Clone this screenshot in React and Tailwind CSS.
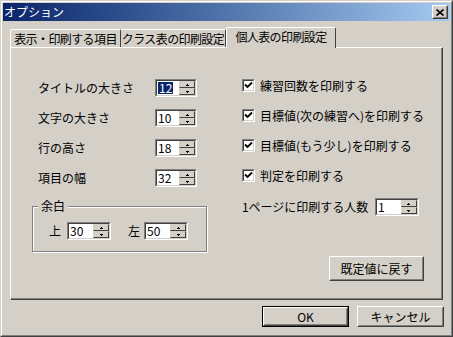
import React from "react";

const FONT = { fontFamily: '"Noto Sans CJK JP", "Noto Sans", sans-serif' };

// sunken 3d edge (edit boxes, checkboxes)
const Sunken = ({ className, children }) => (
  <div className={`border border-t-[#808080] border-l-[#808080] border-b-white border-r-white ${className}`}>
    <div className="h-full w-full border border-t-[#404040] border-l-[#404040] border-b-[#d4d0c8] border-r-[#d4d0c8] bg-white flex">
      {children}
    </div>
  </div>
);

// raised 3d edge (buttons)
const Raised = ({ className, children }) => (
  <div className={`border border-t-white border-l-white border-b-[#404040] border-r-[#404040] bg-[#d4d0c8] ${className}`}>
    <div className="h-full w-full border border-t-[#d4d0c8] border-l-[#d4d0c8] border-b-[#808080] border-r-[#808080] flex items-center justify-center">
      {children}
    </div>
  </div>
);

const SpinHalf = ({ up }) => (
  <div className="flex-1 border border-t-[#d4d0c8] border-l-[#d4d0c8] border-b-[#404040] border-r-[#404040] bg-[#d4d0c8] flex items-center justify-center">
    <svg width="3" height="2" viewBox="0 0 3 2">
      {up ? <path d="M1 0h1v1h1v1H0V1h1z" fill="#000" /> : <path d="M0 0h3v1H2v1H1V1H0z" fill="#000" />}
    </svg>
  </div>
);

const Spin = ({ value, width = "w-[42px]", selected }) => (
  <Sunken className={`${width} h-[18px] shrink-0`}>
    <div className="flex-1 flex items-center pl-px text-[12px] leading-none text-black">
      <span className={selected ? "bg-[#0a246a] text-white px-px" : ""}>{value}</span>
    </div>
    <div className="w-[16px] flex flex-col">
      <SpinHalf up />
      <SpinHalf />
    </div>
  </Sunken>
);

const Check = ({ label }) => (
  <div className="flex items-center h-[13px]">
    <Sunken className="w-[13px] h-[13px] shrink-0">
      <svg width="9" height="9" viewBox="0 0 9 9" className="m-auto">
        <path d="M1 3.5l2.5 2.5L8 1.5" stroke="#000" strokeWidth="1.8" fill="none" />
      </svg>
    </Sunken>
    <span className="ml-[5px] text-[12px] leading-none whitespace-nowrap">{label}</span>
  </div>
);

const Button = ({ children, className, primary }) =>
  primary ? (
    <div className={`border border-black ${className}`}>
      <Raised className="h-full w-full">
        <span className="text-[12px] leading-none">{children}</span>
      </Raised>
    </div>
  ) : (
    <Raised className={className}>
      <span className="text-[12px] leading-none">{children}</span>
    </Raised>
  );

const rows = [
  { label: "タイトルの大きさ", value: "12", selected: true },
  { label: "文字の大きさ", value: "10" },
  { label: "行の高さ", value: "18" },
  { label: "項目の幅", value: "32" },
];

const checks = [
  "練習回数を印刷する",
  "目標値(次の練習へ)を印刷する",
  "目標値(もう少し)を印刷する",
  "判定を印刷する",
];

export default function App() {
  return (
    <div style={FONT} className="w-[453px] h-[337px] bg-[#d4d0c8] text-black border border-t-[#d4d0c8] border-l-[#d4d0c8] border-r-[#404040] border-b-[#404040]">
      <div className="h-full border border-t-white border-l-white border-r-[#808080] border-b-[#808080] p-px flex flex-col">
        {/* title bar */}
        <div className="h-[18px] bg-linear-to-r from-[#0a246a] to-[#a6caf0] flex items-center pl-[1px] pr-[2px]">
          <span className="text-white text-[12px] leading-none">オプション</span>
          <Raised className="ml-auto w-[16px] h-[14px]">
            <svg width="8" height="7" viewBox="0 0 8 7">
              <path d="M0.5 0.5l7 6M7.5 0.5l-7 6" stroke="#000" strokeWidth="1.6" />
            </svg>
          </Raised>
        </div>

        {/* tabs */}
        <div className="mt-[6px] ml-[7px] flex items-end h-[20px] text-[12px] leading-none whitespace-nowrap tracking-[-0.6px]">
          <div className="w-[111px] h-[18px] border-t border-l border-r border-t-white border-l-white border-r-[#404040] rounded-t-[2px] flex items-center justify-center">
            表示・印刷する項目
          </div>
          <div className="w-[105px] h-[18px] border-t border-r border-t-white border-r-[#404040] rounded-t-[2px] flex items-center justify-center">
            クラス表の印刷設定
          </div>
          <div className="relative z-10 -mb-px w-[110px] h-[21px] bg-[#d4d0c8] border-t border-l border-r border-t-white border-l-white border-r-[#404040] rounded-t-[2px] flex items-center justify-center pb-[2px]">
            個人表の印刷設定
          </div>
        </div>

        {/* panel */}
        <div className="ml-[7px] w-[433px] h-[253px] border border-t-white border-l-white border-r-[#404040] border-b-[#404040]">
          <div className="h-full border-r border-b border-r-[#808080] border-b-[#808080] flex">
            {/* left column */}
            <div className="w-[230px] pl-[21px] pt-[31px] flex flex-col">
              <div className="flex flex-col gap-[12px] pl-[6px]">
                {rows.map((r) => (
                  <div key={r.label} className="flex items-center h-[18px]">
                    <span className="w-[117px] text-[12px] leading-none whitespace-nowrap">{r.label}</span>
                    <Spin value={r.value} selected={r.selected} />
                  </div>
                ))}
              </div>
              <div className="relative mt-[19px] w-[175px] h-[46px] border border-[#808080] shadow-[inset_1px_1px_0_#fff,1px_1px_0_#fff] flex items-start pt-[15px] pl-[16px]">
                <span className="absolute -top-[7px] left-[5px] px-[3px] bg-[#d4d0c8] text-[12px] leading-none">余白</span>
                <div className="flex items-center">
                  <span className="text-[12px] leading-none w-[18px]">上</span>
                  <Spin value="30" width="w-[44px]" />
                  <span className="ml-[17px] text-[12px] leading-none w-[16px]">左</span>
                  <Spin value="50" width="w-[44px]" />
                </div>
              </div>
            </div>

            {/* right column */}
            <div className="flex-1 pl-[1px] pt-[31px] pr-[17px] flex flex-col">
              <div className="flex flex-col gap-[17px]">
                {checks.map((c) => (
                  <Check key={c} label={c} />
                ))}
              </div>
              <div className="mt-[16px] flex items-center h-[18px]">
                <span className="w-[133px] text-[12px] leading-none whitespace-nowrap">1ページに印刷する人数</span>
                <Spin value="1" width="w-[44px]" />
              </div>
              <Button className="self-end mt-[40px] w-[95px] h-[25px]">既定値に戻す</Button>
            </div>
          </div>
        </div>

        {/* bottom buttons */}
        <div className="mt-[6px] flex justify-end gap-[8px] pr-[6px]">
          <Button primary className="w-[87px] h-[21px]">OK</Button>
          <Button className="w-[87px] h-[21px]">キャンセル</Button>
        </div>
      </div>
    </div>
  );
}
